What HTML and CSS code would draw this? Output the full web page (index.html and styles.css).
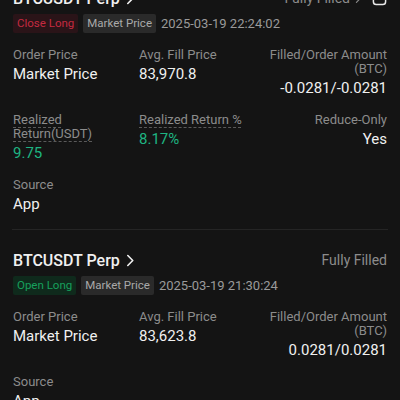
FILE: index.html
```html
<!DOCTYPE html>
<html>
<head>
<meta charset="utf-8">
<link rel="stylesheet" href="styles.css">
</head>
<body>
<div class="list">
  <section class="card first">
    <div class="title-row">
      <div class="title">BTCUSDT Perp <svg class="chev" viewBox="0 0 10 14" width="9" height="13"><path d="M2 1.5 L7.5 7 L2 12.5" fill="none" stroke="#f0f0f0" stroke-width="1.8" stroke-linecap="round" stroke-linejoin="round"/></svg></div>
      <div class="status">Fully Filled <svg class="chev-s" viewBox="0 0 10 14" width="7" height="11"><path d="M2 1.5 L7.5 7 L2 12.5" fill="none" stroke="#8c8c8c" stroke-width="1.6" stroke-linecap="round" stroke-linejoin="round"/></svg>
        <svg class="share" viewBox="0 0 16 16" width="15" height="15"><rect x="1.5" y="1.5" width="13" height="13" rx="3" fill="none" stroke="#e8e8e8" stroke-width="1.6"/></svg></div>
    </div>
    <div class="tags">
      <span class="tag red">Close Long</span>
      <span class="tag gray">Market Price</span>
      <span class="date">2025-03-19 22:24:02</span>
    </div>
    <div class="grid">
      <div class="cell"><div class="label">Order Price</div><div class="value">Market Price</div></div>
      <div class="cell"><div class="label">Avg. Fill Price</div><div class="value">83,970.8</div></div>
      <div class="cell right"><div class="label">Filled/Order Amount (BTC)</div><div class="value">-0.0281/-0.0281</div></div>
      <div class="cell"><div class="label"><span class="dash">Realized Return(USDT)</span></div><div class="value green">9.75</div></div>
      <div class="cell"><div class="label"><span class="dash">Realized Return %</span></div><div class="value green">8.17%</div></div>
      <div class="cell right"><div class="label">Reduce-Only</div><div class="value">Yes</div></div>
      <div class="cell"><div class="label">Source</div><div class="value">App</div></div>
    </div>
  </section>
  <div class="sep"></div>
  <section class="card">
    <div class="title-row">
      <div class="title">BTCUSDT Perp <svg class="chev" viewBox="0 0 10 14" width="9" height="13"><path d="M2 1.5 L7.5 7 L2 12.5" fill="none" stroke="#f0f0f0" stroke-width="1.8" stroke-linecap="round" stroke-linejoin="round"/></svg></div>
      <div class="status">Fully Filled</div>
    </div>
    <div class="tags">
      <span class="tag green-tag">Open Long</span>
      <span class="tag gray">Market Price</span>
      <span class="date">2025-03-19 21:30:24</span>
    </div>
    <div class="grid">
      <div class="cell"><div class="label">Order Price</div><div class="value">Market Price</div></div>
      <div class="cell"><div class="label">Avg. Fill Price</div><div class="value">83,623.8</div></div>
      <div class="cell right"><div class="label">Filled/Order Amount (BTC)</div><div class="value">0.0281/0.0281</div></div>
      <div class="cell"><div class="label">Source</div><div class="value">App</div></div>
    </div>
  </section>
</div>
</body>
</html>
```
FILE: styles.css
```css
html, body {
  margin: 0;
  padding: 0;
  background: #141414;
  overflow: hidden;
}
body {
  font-family: Roboto, "Noto Sans", sans-serif;
  color: #f0f0f0;
}
.list {
  margin-top: -14px;
}
.card {
  padding: 0 13px 15px;
}
.card + .sep + .card {
  padding-top: 18px;
}
.sep {
  height: 1px;
  background: #252525;
  margin: 0 12px;
}
.title-row {
  display: flex;
  justify-content: space-between;
  align-items: center;
  height: 24px;
}
.title {
  font-size: 16px;
  font-weight: 500;
  display: flex;
  align-items: center;
  gap: 6px;
}
.status {
  font-size: 14px;
  color: #8c8c8c;
  display: flex;
  align-items: center;
  gap: 5px;
}
.share {
  margin-left: 5px;
}
.tags {
  display: flex;
  align-items: center;
  gap: 5px;
  margin-top: 4px;
}
.tag {
  font-size: 11.5px;
  line-height: 19px;
  padding: 0 4px;
  border-radius: 2px;
}
.red { color: #c42a40; background: #2a1418; }
.green-tag { color: #17a05c; background: #0f2a1c; }
.gray { color: #a9a9a9; background: #2a2a2a; }
.date {
  font-size: 13px;
  color: #9a9a9a;
}
.grid {
  display: grid;
  grid-template-columns: 1fr 1fr 1fr;
  column-gap: 4px;
  row-gap: 15px;
  margin-top: 15px;
}
.cell.right { text-align: right; }
.label {
  font-size: 13px;
  line-height: 14px;
  color: #8c8c8c;
}
.dash {
  text-decoration: underline dashed #5a5a5a;
  text-underline-offset: 3px;
  text-decoration-thickness: 1px;
}
.value {
  font-size: 15px;
  line-height: 20px;
  margin-top: 2px;
  color: #f0f0f0;
}
.value.green { color: #1eb482; }
```
